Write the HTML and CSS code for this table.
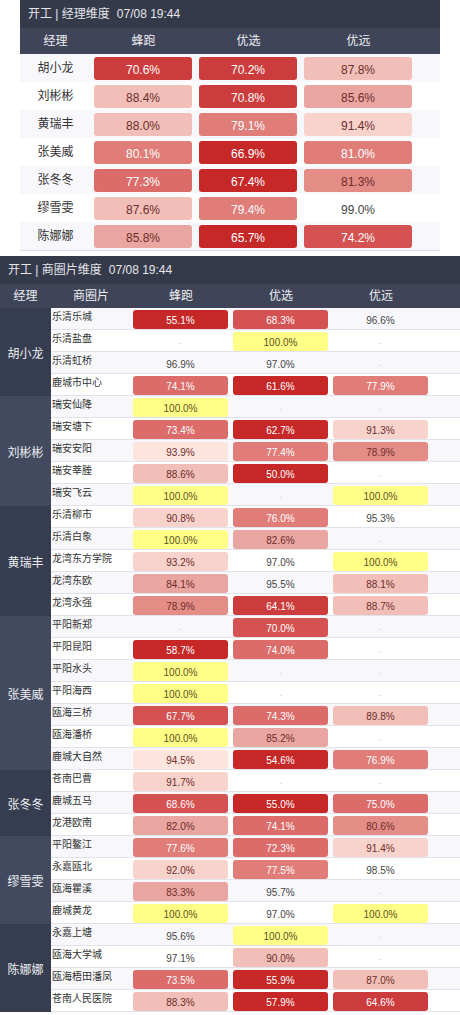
FILE: index.html
```html
<!DOCTYPE html>
<html lang="zh">

<head>
    <meta charset="UTF-8">
    <title>开工</title>
    <meta name="viewport" content="width=device-width, initial-scale=1">
    <link rel="stylesheet" href="styles.css">
</head>

<body>
    <div class="board board-manager">
        <div class="board-title">开工 | 经理维度<span class="time">07/08 19:44</span></div>
        <div class="head-row m-grid">
            <div>经理</div>
            <div>蜂跑</div>
            <div>优选</div>
            <div>优远</div>
        </div>
        <div id="manager-rows"></div>
    </div>

    <div class="board board-area">
        <div class="board-title">开工 | 商圈片维度<span class="time">07/08 19:44</span></div>
        <div class="head-row a-grid">
            <div>经理</div>
            <div>商圈片</div>
            <div>蜂跑</div>
            <div>优选</div>
            <div>优远</div>
        </div>
        <div id="area-rows"></div>
    </div>

    <script>
        const managerData = [
            ['胡小龙', 70.6, 70.2, 87.8],
            ['刘彬彬', 88.4, 70.8, 85.6],
            ['黄瑞丰', 88.0, 79.1, 91.4],
            ['张美威', 80.1, 66.9, 81.0],
            ['张冬冬', 77.3, 67.4, 81.3],
            ['缪雪雯', 87.6, 79.4, 99.0],
            ['陈娜娜', 85.8, 65.7, 74.2]
        ];

        const areaData = [
            { name: '胡小龙', rows: [
                ['乐清乐城', 55.1, 68.3, 96.6],
                ['乐清盐盘', null, 100, null],
                ['乐清虹桥', 96.9, 97.0, null],
                ['鹿城市中心', 74.1, 61.6, 77.9]
            ] },
            { name: '刘彬彬', rows: [
                ['瑞安仙降', 100, null, null],
                ['瑞安塘下', 73.4, 62.7, 91.3],
                ['瑞安安阳', 93.9, 77.4, 78.9],
                ['瑞安莘塍', 88.6, 50.0, null],
                ['瑞安飞云', 100, null, 100]
            ] },
            { name: '黄瑞丰', rows: [
                ['乐清柳市', 90.8, 76.0, 95.3],
                ['乐清白象', 100, 82.6, null],
                ['龙湾东方学院', 93.2, 97.0, 100],
                ['龙湾东欧', 84.1, 95.5, 88.1],
                ['龙湾永强', 78.9, 64.1, 88.7]
            ] },
            { name: '张美威', rows: [
                ['平阳新郑', null, 70.0, null],
                ['平阳昆阳', 58.7, 74.0, null],
                ['平阳水头', 100, null, null],
                ['平阳海西', 100, null, null],
                ['瓯海三桥', 67.7, 74.3, 89.8],
                ['瓯海潘桥', 100, 85.2, null],
                ['鹿城大自然', 94.5, 54.6, 76.9]
            ] },
            { name: '张冬冬', rows: [
                ['苍南巴曹', 91.7, null, null],
                ['鹿城五马', 68.6, 55.0, 75.0],
                ['龙港欧南', 82.0, 74.1, 80.6]
            ] },
            { name: '缪雪雯', rows: [
                ['平阳鳌江', 77.6, 72.3, 91.4],
                ['永嘉瓯北', 92.0, 77.5, 98.5],
                ['瓯海瞿溪', 83.3, 95.7, null],
                ['鹿城黄龙', 100, 97.0, 100]
            ] },
            { name: '陈娜娜', rows: [
                ['永嘉上塘', 95.6, 100, null],
                ['瓯海大学城', 97.1, 90.0, null],
                ['瓯海梧田潘凤', 73.5, 55.9, 87.0],
                ['苍南人民医院', 88.3, 57.9, 64.6]
            ] }
        ];

        // progi kolorów: [minimum, klasa]
        const managerSteps = [[95, ''], [90.5, 'c-2'], [86.5, 'c-3'], [83, 'c-4'], [81.2, 'c-5'],
            [78.5, 'c-6'], [75, 'c-7'], [72, 'c-8'], [69, 'c-9'], [0, 'c-10']];
        const areaSteps = [[95, ''], [93.5, 'c-1'], [90.5, 'c-2'], [86.5, 'c-3'], [81.5, 'c-4'],
            [78.5, 'c-5'], [75.5, 'c-6'], [72, 'c-7'], [66, 'c-8'], [63.5, 'c-9'], [0, 'c-10']];

        function levelClass(value, steps) {
            if (value >= 100) return 'c-full';
            for (const [min, cls] of steps) {
                if (value >= min) return cls;
            }
            return '';
        }

        function valueCell(value, steps) {
            if (value === null) return '<div class="val empty">-</div>';
            const cls = levelClass(value, steps);
            return `<div class="val${cls ? ' pill ' + cls : ''}">${value.toFixed(1)}%</div>`;
        }

        function renderManagers() {
            let html = '';
            managerData.forEach(([name, ...values]) => {
                html += `<div class="m-row m-grid">
                    <div class="m-name">${name}</div>
                    ${values.map(v => valueCell(v, managerSteps)).join('')}
                </div>`;
            });
            document.getElementById('manager-rows').innerHTML = html;
        }

        function renderAreas() {
            let html = '';
            let index = 0;
            areaData.forEach(group => {
                html += `<div class="group"><div class="g-name">${group.name}</div><div class="g-rows">`;
                group.rows.forEach(([area, ...values]) => {
                    const alt = index % 2 === 0 ? ' alt' : '';
                    html += `<div class="a-row a-body${alt}">
                        <div class="a-name">${area}</div>
                        ${values.map(v => valueCell(v, areaSteps)).join('')}
                    </div>`;
                    index++;
                });
                html += `</div></div>`;
            });
            document.getElementById('area-rows').innerHTML = html;
        }

        renderManagers();
        renderAreas();
    </script>
</body>

</html>
```

FILE: styles.css
```css
body {
    margin: 0;
    font-family: "Liberation Sans", "Noto Sans CJK SC", sans-serif;
    background-color: #fff;
    color: #333;
}

.board-title {
    height: 28px;
    line-height: 28px;
    padding: 0 8px;
    background-color: #353a4b;
    color: #e4e5ea;
    font-size: 12px;
}

.time {
    margin-left: 7px;
}

.head-row {
    background-color: #3f4458;
    color: #eceef2;
    font-size: 12px;
    text-align: center;
}

/* Przegląd wg kierowników */

.board-manager {
    margin: 0 20px;
    border-bottom: 1px solid #dcdce6;
}

.m-grid {
    display: grid;
    grid-template-columns: 71px 105px 105px 115px 1fr;
}

.board-manager .head-row {
    height: 26px;
    line-height: 26px;
}

.m-row {
    height: 28px;
}

.m-row:nth-child(odd) {
    background-color: #f8f8fc;
}

.m-name {
    line-height: 28px;
    text-align: center;
    font-size: 12px;
    color: #333;
}

.m-row .val {
    margin: 3px 4px 2px 3px;
    height: 23px;
    padding-top: 4px;
    box-sizing: border-box;
    line-height: 19px;
    font-size: 12px;
}

/* Przegląd wg obszarów */

.board-area {
    margin-top: 5px;
}

.a-grid,
.a-body {
    display: grid;
    grid-template-columns: 51px 80px 100px 100px 100px 1fr;
}

.a-body {
    grid-template-columns: 80px 100px 100px 100px 1fr;
}

.board-area .head-row {
    height: 24px;
    line-height: 24px;
}

.group {
    display: flex;
}

.g-name {
    width: 51px;
    flex: none;
    display: flex;
    align-items: center;
    justify-content: center;
    background-color: #373d50;
    color: #eceef2;
    font-size: 12px;
}

.group:nth-child(even) .g-name {
    background-color: #434a5f;
}

.g-rows {
    flex: 1;
}

.a-row {
    height: 22px;
    box-sizing: border-box;
    border-bottom: 1px solid #e2e2ec;
    background-color: #fff;
}

.a-row.alt {
    background-color: #f8f8fc;
}

.a-name {
    padding: 2px 0 0 1px;
    font-size: 10px;
    line-height: 14px;
    color: #333;
    white-space: nowrap;
}

.a-row .val {
    margin: 2px 3px 0 2px;
    height: 19px;
    padding-top: 2px;
    box-sizing: border-box;
    line-height: 17px;
    font-size: 10px;
}

/* Wartości */

.val {
    text-align: center;
    color: #444;
}

.val.empty {
    color: #c4c4c8;
    font-size: 7px;
}

.pill {
    border-radius: 3px;
    color: #fff;
}

.c-1 {
    background-color: #fde4dc;
    color: #6e2c2c;
}

.c-2 {
    background-color: #f8d3cb;
    color: #6e2c2c;
}

.c-3 {
    background-color: #f1bfb7;
    color: #6e2c2c;
}

.c-4 {
    background-color: #e9a6a0;
    color: #6e2c2c;
}

.c-5 {
    background-color: #e48c86;
    color: #6e2c2c;
}

.c-6 {
    background-color: #e07d78;
}

.c-7 {
    background-color: #dc6c69;
}

.c-8 {
    background-color: #d45252;
}

.c-9 {
    background-color: #cd3c3c;
}

.c-10 {
    background-color: #c62828;
}

.c-full {
    background-color: #ffff88;
    color: #5b4f1e;
}
```
